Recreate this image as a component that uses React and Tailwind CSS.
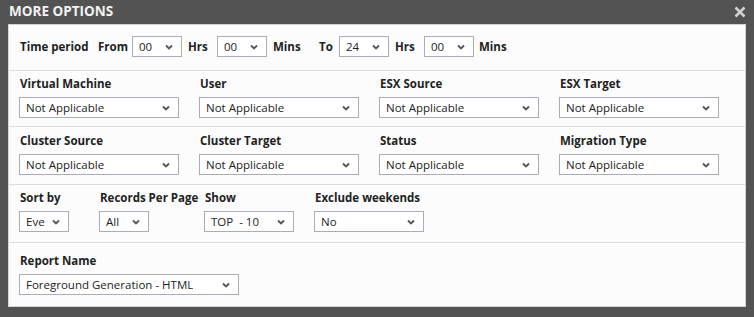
import React from "react";

const font = { fontFamily: '"Open Sans", "Noto Sans", Arial, sans-serif' };

function Chevron() {
  return (
    <svg width="8" height="6" viewBox="0 0 8 6" className="shrink-0">
      <path d="M1 1.5 L4 4.5 L7 1.5" fill="none" stroke="#555" strokeWidth="1.9" />
    </svg>
  );
}

function FakeSelect({ value, w }) {
  return (
    <div
      className={`flex h-[21px] items-center justify-between border border-[#a9adb8] bg-white pl-[6px] pr-[8px] text-[11.5px] font-normal text-[#222] ${w}`}
    >
      <span className="truncate whitespace-pre leading-[16px]">{value}</span>
      <Chevron />
    </div>
  );
}

function Field({ label, value, col, w }) {
  return (
    <div className={`flex flex-col ${col}`}>
      <span className="h-[16px] whitespace-nowrap pl-[1px] text-[11.5px] font-bold leading-[16px] text-[#222]">
        {label}
      </span>
      <div className="mt-[5px]">
        <FakeSelect value={value} w={w} />
      </div>
    </div>
  );
}

export default function App() {
  const row2 = [
    ["Virtual Machine", "Not Applicable"],
    ["User", "Not Applicable"],
    ["ESX Source", "Not Applicable"],
    ["ESX Target", "Not Applicable"],
  ];
  const row3 = [
    ["Cluster Source", "Not Applicable"],
    ["Cluster Target", "Not Applicable"],
    ["Status", "Not Applicable"],
    ["Migration Type", "Not Applicable"],
  ];

  return (
    <div className="h-[317px] w-[754px] overflow-hidden bg-[#535353]" style={font}>
      <div className="flex h-[24px] items-center justify-between pl-[9px] pr-[8px]">
        <span className="text-[13.5px] font-bold leading-none text-[#f2f2f2]">MORE OPTIONS</span>
        <svg width="12" height="12" viewBox="0 0 12 12">
          <path d="M1.5 1.5 L10.5 10.5 M10.5 1.5 L1.5 10.5" stroke="#cfcfcf" strokeWidth="2.6" />
        </svg>
      </div>

      <div className="mx-[8px] h-[283px] border border-[#d6d6d6] bg-[#fcfcfc]">
        {/* time period */}
        <div className="flex h-[46px] items-center border-b border-[#dcdcdc] pb-[2px] pl-[11px] text-[11.5px] font-bold text-[#222]">
          <span className="w-[78px]">Time period</span>
          <span className="w-[34px]">From</span>
          <FakeSelect value="00" w="w-[50px]" />
          <span className="ml-[6px] w-[29px]">Hrs</span>
          <FakeSelect value="00" w="w-[50px]" />
          <span className="ml-[6px] w-[46px]">Mins</span>
          <span className="w-[20px]">To</span>
          <FakeSelect value="24" w="w-[50px]" />
          <span className="ml-[6px] w-[29px]">Hrs</span>
          <FakeSelect value="00" w="w-[50px]" />
          <span className="ml-[5px]">Mins</span>
        </div>

        {/* VM / user / ESX */}
        <div className="flex h-[56px] border-b border-[#dcdcdc] pl-[10px] pt-[5px]">
          {row2.map(([l, v]) => (
            <Field key={l} label={l} value={v} col="w-[180px]" w="w-[160px]" />
          ))}
        </div>

        {/* cluster / status */}
        <div className="flex h-[58px] border-b border-[#dcdcdc] pl-[10px] pt-[6px]">
          {row3.map(([l, v]) => (
            <Field key={l} label={l} value={v} col="w-[180px]" w="w-[160px]" />
          ))}
        </div>

        {/* sort / records / show / weekends */}
        <div className="flex h-[58px] border-b border-[#dcdcdc] pl-[10px] pt-[5px]">
          <Field label="Sort by" value="Eve" col="w-[80px]" w="w-[50px]" />
          <Field label="Records Per Page" value="All" col="w-[105px]" w="w-[50px]" />
          <Field label="Show" value="TOP  - 10" col="w-[110px]" w="w-[90px]" />
          <Field label="Exclude weekends" value="No" col="w-[120px]" w="w-[110px]" />
        </div>

        {/* report name */}
        <div className="flex pl-[10px] pt-[10px]">
          <Field label="Report Name" value="Foreground Generation - HTML" col="w-[240px]" w="w-[220px]" />
        </div>
      </div>
    </div>
  );
}
